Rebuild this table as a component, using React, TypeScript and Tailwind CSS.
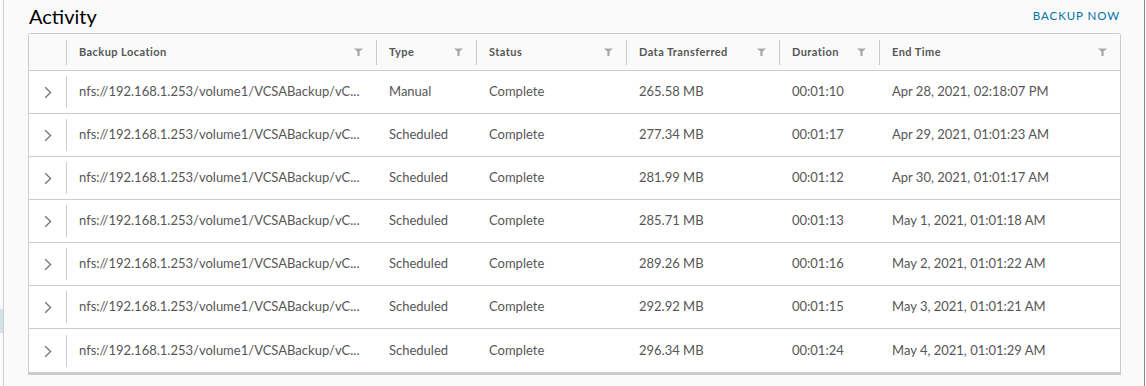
const rows = [
  ["Manual", "265.58 MB", "00:01:10", "Apr 28, 2021, 02:18:07 PM"],
  ["Scheduled", "277.34 MB", "00:01:17", "Apr 29, 2021, 01:01:23 AM"],
  ["Scheduled", "281.99 MB", "00:01:12", "Apr 30, 2021, 01:01:17 AM"],
  ["Scheduled", "285.71 MB", "00:01:13", "May 1, 2021, 01:01:18 AM"],
  ["Scheduled", "289.26 MB", "00:01:16", "May 2, 2021, 01:01:22 AM"],
  ["Scheduled", "292.92 MB", "00:01:15", "May 3, 2021, 01:01:21 AM"],
  ["Scheduled", "296.34 MB", "00:01:24", "May 4, 2021, 01:01:29 AM"],
]

const columns = ["Backup Location", "Type", "Status", "Data Transferred", "Duration", "End Time"]

const grid = "grid grid-cols-[37px_310px_100px_150px_153px_100px_1fr]"

function FilterIcon() {
  return (
    <svg width="9" height="8" viewBox="0 0 9 8" className="shrink-0">
      <path d="M0 0.5h9L5.6 3.6V8H3.4V3.6z" fill="#a8a8a8" />
    </svg>
  )
}

function Chevron() {
  return (
    <svg width="8" height="13" viewBox="0 0 8 13">
      <path d="M1.2 1.2L6.6 6.5L1.2 11.8" fill="none" stroke="#727272" strokeWidth="1.3" />
    </svg>
  )
}

export default function App() {
  return (
    <div className="flex h-[386px] w-[1146px] bg-[#fafafa] font-['Lato',sans-serif] text-[#565656]">
      <div className="flex w-[3px] flex-col pt-[309px]">
        <div className="h-[24px] bg-[#d6e2e9]" />
      </div>
      <div className="w-px bg-[#cfcfcf]" />
      <div className="flex-1 pl-[24px] pr-[23px]">
        <div className="flex h-[33px] items-start justify-between">
          <h3 className="pl-px pt-[4px] text-[20px] leading-[24px] text-black">Activity</h3>
          <button className="mr-[1px] pt-[9px] text-[11.5px] leading-[13px] tracking-[0.08em] text-[#0072a3]">
            BACKUP NOW
          </button>
        </div>
        <div className="rounded-t-[3px] border border-b-[3px] border-[#ccc] bg-white">
          <div className={`${grid} h-[37px] items-center border-b border-[#ccc] bg-[#fafafa] text-[11px] font-bold tracking-[0.04em]`}>
            <div />
            {columns.map((c) => (
              <div key={c} className="flex h-[25px] items-center justify-between border-l border-[#ccc] pl-3 pr-[13px]">
                <span>{c}</span>
                <FilterIcon />
              </div>
            ))}
          </div>
          {rows.map((r, i) => (
            <div
              key={i}
              className={`${grid} h-[43px] items-center text-[13px] ${i < rows.length - 1 ? "border-b border-[#ccc]" : ""}`}
            >
              <div className="flex justify-center pl-[1px] pt-[1px]">
                <Chevron />
              </div>
              <div className="flex h-[32px] items-center border-l border-[#ccc] pl-3">
                nfs://192.168.1.253/volume1/VCSABackup/vC...
              </div>
              <div className="pl-[13px]">{r[0]}</div>
              <div className="pl-[13px]">Complete</div>
              <div className="pl-[13px]">{r[1]}</div>
              <div className="pl-[13px]">{r[2]}</div>
              <div className="pl-[13px]">{r[3]}</div>
            </div>
          ))}
        </div>
      </div>
      <div className="w-px bg-[#8a8a8a]" />
      <div className="w-px bg-white" />
    </div>
  )
}
